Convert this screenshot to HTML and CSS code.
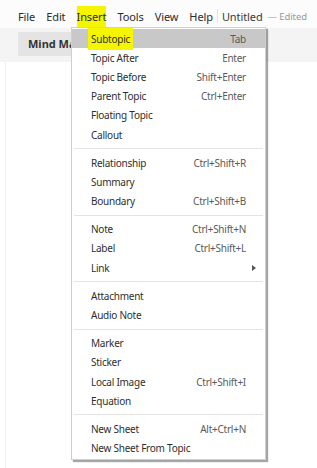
FILE: index.html
```html
<!DOCTYPE html>
<html lang="en">
<head>
    <meta charset="UTF-8">
    <meta name="viewport" content="width=device-width, initial-scale=1.0">
    <title>Untitled - Insert menu</title>
    <link rel="stylesheet" href="styles.css">
</head>
<body>
    <div class="menubar">
        <span class="menu-title">File</span>
        <span class="menu-title">Edit</span>
        <span class="menu-title open"><span class="mark">Insert</span></span>
        <span class="menu-title">Tools</span>
        <span class="menu-title">View</span>
        <span class="menu-title">Help</span>
        <span class="doc-sep"></span>
        <span class="doc-name">Untitled</span>
        <span class="doc-state">— Edited</span>
    </div>

    <div class="toolbar">
        <div class="sheet-tab">Mind Map</div>
    </div>

    <div class="canvas"></div>

    <div class="dropdown">
        <div class="item active"><span class="label"><span class="mark">Subtopic</span></span><span class="key">Tab</span></div>
        <div class="item"><span class="label">Topic After</span><span class="key">Enter</span></div>
        <div class="item"><span class="label">Topic Before</span><span class="key">Shift+Enter</span></div>
        <div class="item"><span class="label">Parent Topic</span><span class="key">Ctrl+Enter</span></div>
        <div class="item"><span class="label">Floating Topic</span></div>
        <div class="item"><span class="label">Callout</span></div>
        <div class="sep"></div>
        <div class="item"><span class="label">Relationship</span><span class="key">Ctrl+Shift+R</span></div>
        <div class="item"><span class="label">Summary</span></div>
        <div class="item"><span class="label">Boundary</span><span class="key">Ctrl+Shift+B</span></div>
        <div class="sep"></div>
        <div class="item"><span class="label">Note</span><span class="key">Ctrl+Shift+N</span></div>
        <div class="item"><span class="label">Label</span><span class="key">Ctrl+Shift+L</span></div>
        <div class="item"><span class="label">Link</span><span class="arrow"></span></div>
        <div class="sep"></div>
        <div class="item"><span class="label">Attachment</span></div>
        <div class="item"><span class="label">Audio Note</span></div>
        <div class="sep"></div>
        <div class="item"><span class="label">Marker</span></div>
        <div class="item"><span class="label">Sticker</span></div>
        <div class="item"><span class="label">Local Image</span><span class="key">Ctrl+Shift+I</span></div>
        <div class="item"><span class="label">Equation</span></div>
        <div class="sep"></div>
        <div class="item"><span class="label">New Sheet</span><span class="key">Alt+Ctrl+N</span></div>
        <div class="item"><span class="label">New Sheet From Topic</span></div>
    </div>
</body>
</html>
```

FILE: styles.css
```css
body {
    margin: 0;
    background-color: #ffffff;
    font-family: "Noto Sans", "Open Sans", sans-serif;
    color: #2b2b2b;
}
.menubar {
    height: 28px;
    box-sizing: border-box;
    padding: 4px 0 0 18px;
    display: flex;
    align-items: center;
    font-size: 11px;
    letter-spacing: -0.1px;
    background-color: #fcfcfc;
}
.menu-title {
    margin-right: 11px;
}
.mark {
    background-color: #f5f500;
    padding: 3px 1px;
}
.menu-title.open .mark {
    padding: 3px 0;
}
.doc-sep {
    width: 1px;
    height: 14px;
    background-color: #e2e2e2;
    margin: 0 4px 0 -7px;
}
.doc-name {
    color: #3a3a3a;
}
.doc-state {
    margin-left: 5px;
    font-size: 9.5px;
    color: #9a9a9a;
}
.toolbar {
    height: 34px;
    background-color: #f4f4f4;
    padding: 3px 0 0 18px;
    box-sizing: border-box;
}
.sheet-tab {
    display: inline-block;
    height: 24px;
    line-height: 24px;
    padding: 0 14px 0 10px;
    background-color: #e4e4e4;
    font-size: 11px;
    font-weight: bold;
    color: #333;
}
.canvas {
    height: 406px;
    margin-left: 5px;
    border-left: 1px solid #f0f0f0;
}
.dropdown {
    position: absolute;
    left: 71px;
    top: 27px;
    width: 193px;
    padding: 1px 0 1px;
    background-color: #ffffff;
    border: 1px solid #cfcfcf;
    box-shadow: 2px 2px 1px rgba(0, 0, 0, 0.35);
    font-size: 10px;
    letter-spacing: -0.25px;
}
.item {
    height: 19.2px;
    display: flex;
    align-items: center;
    justify-content: space-between;
    padding: 0 19px 0 19px;
    color: #2e2e2e;
}
.item.active {
    background-color: #c8c8c8;
}
.item.active .mark {
    padding: 4px 3px;
    margin-left: -3px;
}
.key {
    color: #5a5a5a;
}
.arrow {
    width: 0;
    height: 0;
    margin-right: -10px;
    border-top: 3.5px solid transparent;
    border-bottom: 3.5px solid transparent;
    border-left: 4px solid #555;
}
.sep {
    height: 1px;
    margin: 4px 2px 4px 2px;
    background-color: #e4e4e4;
}
```
